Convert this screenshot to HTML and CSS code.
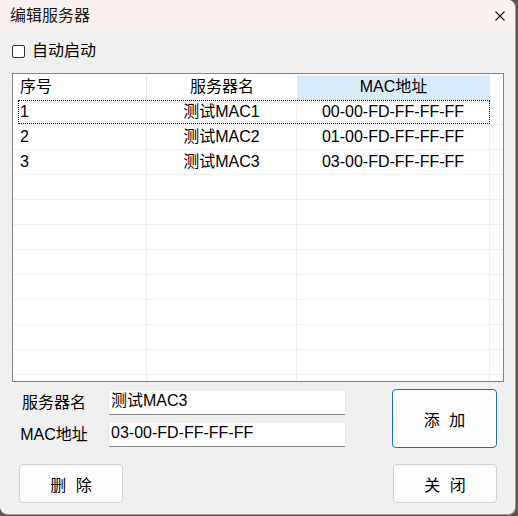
FILE: index.html
```html
<!DOCTYPE html>
<html lang="zh-CN">
<head>
<meta charset="utf-8">
<title>编辑服务器</title>
<link rel="stylesheet" href="styles.css">
</head>
<body>
<div class="window">
  <div class="titlebar">
    <span class="title">编辑服务器</span>
    <svg class="close" width="10" height="10" viewBox="0 0 10 10"><path d="M0.5 0.5 L9.5 9.5 M9.5 0.5 L0.5 9.5" stroke="#1a1a1a" stroke-width="1.1" fill="none"/></svg>
  </div>
  <div class="options">
    <span class="checkbox"></span>
    <span class="opt-label">自动启动</span>
  </div>
  <div class="list">
    <div class="row head">
      <div class="cell c1">序号</div>
      <div class="cell c2">服务器名</div>
      <div class="cell c3 sorted">MAC地址</div>
      <div class="cell c4"></div>
    </div>
    <div class="body">
      <div class="focus"></div>
      <div class="row"><div class="cell c1">1</div><div class="cell c2">测试MAC1</div><div class="cell c3">00-00-FD-FF-FF-FF</div><div class="cell c4"></div></div>
      <div class="row"><div class="cell c1">2</div><div class="cell c2">测试MAC2</div><div class="cell c3">01-00-FD-FF-FF-FF</div><div class="cell c4"></div></div>
      <div class="row"><div class="cell c1">3</div><div class="cell c2">测试MAC3</div><div class="cell c3">03-00-FD-FF-FF-FF</div><div class="cell c4"></div></div>
      <div class="row"><div class="cell c1"></div><div class="cell c2"></div><div class="cell c3"></div><div class="cell c4"></div></div>
      <div class="row"><div class="cell c1"></div><div class="cell c2"></div><div class="cell c3"></div><div class="cell c4"></div></div>
      <div class="row"><div class="cell c1"></div><div class="cell c2"></div><div class="cell c3"></div><div class="cell c4"></div></div>
      <div class="row"><div class="cell c1"></div><div class="cell c2"></div><div class="cell c3"></div><div class="cell c4"></div></div>
      <div class="row"><div class="cell c1"></div><div class="cell c2"></div><div class="cell c3"></div><div class="cell c4"></div></div>
      <div class="row"><div class="cell c1"></div><div class="cell c2"></div><div class="cell c3"></div><div class="cell c4"></div></div>
      <div class="row"><div class="cell c1"></div><div class="cell c2"></div><div class="cell c3"></div><div class="cell c4"></div></div>
      <div class="row"><div class="cell c1"></div><div class="cell c2"></div><div class="cell c3"></div><div class="cell c4"></div></div>
      <div class="row last"><div class="cell c1"></div><div class="cell c2"></div><div class="cell c3"></div><div class="cell c4"></div></div>
    </div>
  </div>
  <div class="form">
    <div class="fields">
      <span class="label">服务器名</span>
      <div class="input">测试MAC3</div>
      <span class="label">MAC地址</span>
      <div class="input">03-00-FD-FF-FF-FF</div>
    </div>
    <button class="btn primary add">添 加</button>
  </div>
  <div class="actions">
    <button class="btn">删 除</button>
    <button class="btn">关 闭</button>
  </div>
</div>
</body>
</html>
```

FILE: styles.css
```css
html, body {
  margin: 0;
  padding: 0;
}
body {
  width: 518px;
  height: 516px;
  background: #5e5552;
  font-family: "Liberation Sans", "Noto Sans CJK SC", sans-serif;
  font-size: 16px;
  color: #000;
  overflow: hidden;
}
.window {
  width: 516px;
  height: 515px;
  box-sizing: border-box;
  background: #f0f0f0;
  border-radius: 0 8px 8px 8px;
  border-right: 1px solid #9c9c9c;
  border-bottom: 1px solid #9c9c9c;
  overflow: hidden;
}
.titlebar {
  height: 32px;
  background: #f7f0ee;
  display: flex;
  align-items: center;
  justify-content: space-between;
  padding: 0 10px 0 10px;
}
.title {
  font-size: 16px;
  line-height: 20px;
  color: #1a1a1a;
}
.close {
  display: block;
  margin-right: 0;
}
.options {
  display: flex;
  align-items: center;
  height: 20px;
  margin-top: 9px;
  padding-left: 12px;
}
.checkbox {
  width: 11px;
  height: 11px;
  border: 1px solid #333;
  border-radius: 2px;
  background: #fff;
}
.opt-label {
  margin-left: 7px;
  line-height: 20px;
}
.list {
  margin: 12px 0 0 12px;
  width: 492px;
  height: 309px;
  box-sizing: border-box;
  border: 1px solid #82878f;
  background: #fff;
  overflow: hidden;
}
.row {
  display: grid;
  grid-template-columns: 134px 150px 193px 1fr;
  height: 25px;
  box-sizing: border-box;
  border-bottom: 1px solid #f0f0f0;
}
.row.head {
  height: 26px;
  padding-top: 1px;
  border-bottom: none;
}
.cell {
  line-height: 24px;
  white-space: nowrap;
  overflow: hidden;
  box-sizing: border-box;
  border-right: 1px solid #f0f0f0;
}
.head .cell {
  line-height: 24px;
  border-right-color: #e5e5e5;
}
.cell.c1 {
  padding-left: 7px;
}
.cell.c2, .cell.c3 {
  text-align: center;
}
.cell.c4 {
  border-right: none;
}
.head .c2 {
  border-right: none;
}
.head .sorted {
  background: #d9ebf9;
  border-right: none;
}
.body {
  position: relative;
}
.focus {
  position: absolute;
  left: 5px;
  top: 0;
  width: 472px;
  height: 24px;
  box-sizing: border-box;
  border: 1px dotted #000;
}
.form {
  display: flex;
  align-items: flex-start;
  margin-top: 7px;
  padding: 0 18px 0 12px;
}
.fields {
  display: grid;
  grid-template-columns: 84px 238px;
  grid-auto-rows: 26px;
  column-gap: 12px;
  row-gap: 6px;
}
.label {
  text-align: center;
  line-height: 28px;
}
.input {
  box-sizing: border-box;
  height: 26px;
  background: #fff;
  border: 1px solid #e6e6e6;
  border-bottom-color: #888;
  border-radius: 2px;
  padding-left: 2px;
  line-height: 22px;
}
.btn {
  font-family: "Noto Sans CJK SC", sans-serif;
  font-size: 16px;
  color: #000;
  width: 105px;
  height: 39px;
  box-sizing: border-box;
  background: #fdfdfd;
  border: 1px solid #d1d1d1;
  border-radius: 4px;
  padding: 0;
  word-spacing: 6px;
}
.btn.primary {
  border-color: #1a6fc4;
}
.add {
  margin-left: auto;
  height: 59px;
}
.actions {
  display: flex;
  justify-content: space-between;
  margin-top: 16px;
  padding: 0 18px 0 19px;
}
.actions .btn {
  width: 104px;
}
```
